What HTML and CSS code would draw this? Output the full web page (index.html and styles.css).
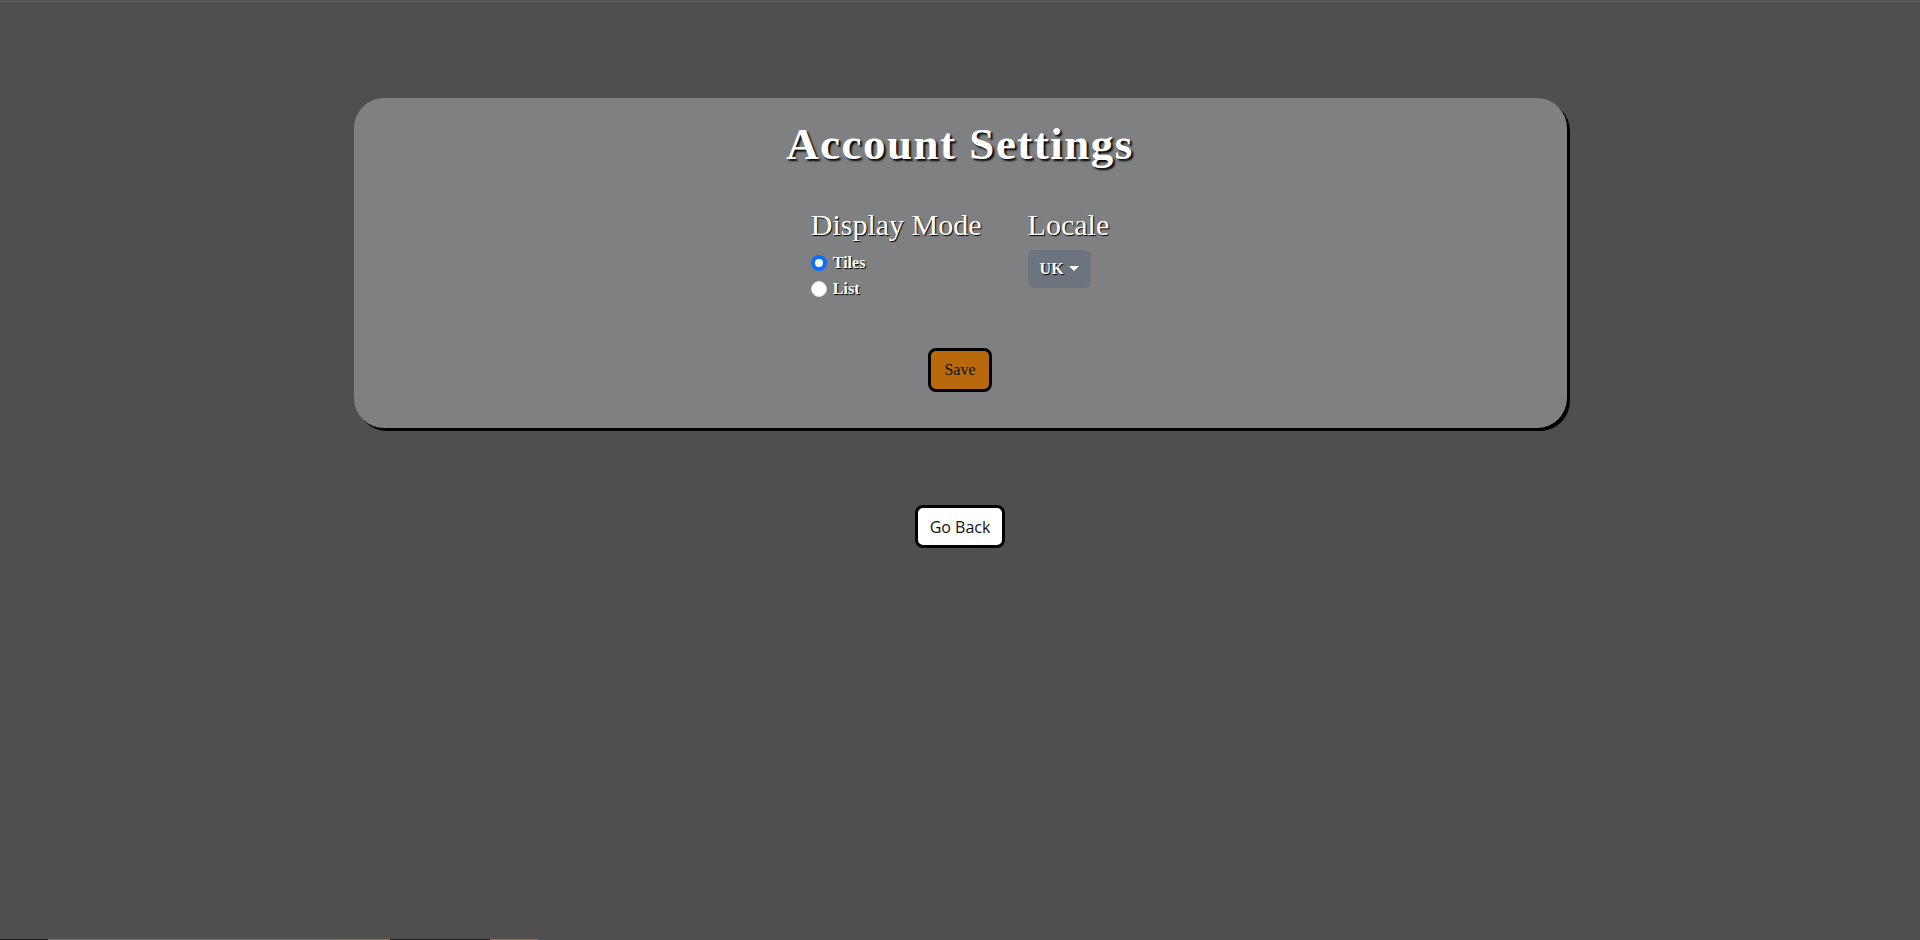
FILE: index.html
```html
<!DOCTYPE html>
<html lang="en">
<head>
<meta charset="utf-8">
<title>Account Settings</title>
<link rel="stylesheet" href="styles.css">
</head>
<body>
<div class="topline"></div>
<main class="page">
  <section class="card">
    <h1 class="title">Account Settings</h1>
    <div class="settings">
      <div class="group">
        <h3 class="group-title">Display Mode</h3>
        <label class="radio"><input type="radio" name="mode" checked><span>Tiles</span></label>
        <label class="radio"><input type="radio" name="mode"><span>List</span></label>
      </div>
      <div class="group">
        <h3 class="group-title">Locale</h3>
        <button class="dropdown" type="button">UK<span class="caret"></span></button>
      </div>
    </div>
    <button class="save" type="button">Save</button>
  </section>
  <button class="back" type="button">Go Back</button>
</main>
<div class="bottom-strip">
  <span class="s1"></span><span class="s2"></span><span class="s3"></span><span class="s4"></span><span class="s5"></span>
</div>
</body>
</html>
```
FILE: styles.css
```css
html, body {
  margin: 0;
  padding: 0;
}
body {
  background: #4f4f4f;
  min-height: 940px;
  display: flex;
  flex-direction: column;
  font-family: "Liberation Serif", "Times New Roman", serif;
  color: #fff;
}
.topline {
  height: 1px;
  margin-top: 1px;
  background: #5d5b66;
}
.page {
  display: flex;
  flex-direction: column;
  align-items: center;
  padding-top: 96px;
}
.card {
  width: 1213px;
  box-sizing: border-box;
  background: #7f8082;
  border-radius: 30px;
  box-shadow: 3px 3px 0 #000;
  display: flex;
  flex-direction: column;
  align-items: center;
  padding: 22px 0 36px;
}
.title {
  margin: 0;
  font-size: 45px;
  line-height: 49px;
  font-weight: 700;
  letter-spacing: 1.5px;
  text-shadow: 2px 2px 2px #000;
}
.settings {
  display: flex;
  gap: 46px;
  margin-top: 39px;
}
.group {
  display: flex;
  flex-direction: column;
  align-items: flex-start;
}
.group-title {
  margin: 0 0 8px;
  font-size: 30px;
  line-height: 34px;
  font-weight: 400;
  text-shadow: 1px 1px 1px #000;
}
.radio {
  display: flex;
  align-items: center;
  gap: 6px;
  height: 26px;
  font-size: 16px;
  font-weight: 700;
  text-shadow: 1px 1px 1px #000;
}
.radio input {
  appearance: none;
  margin: 0;
  width: 16px;
  height: 16px;
  border-radius: 50%;
  background: #fff;
  border: 1px solid #ddd;
  box-sizing: border-box;
}
.radio input:checked {
  background: #fff;
  border: 4px solid #0d6efd;
}
.dropdown {
  display: flex;
  align-items: center;
  gap: 5px;
  height: 38px;
  width: 63px;
  justify-content: center;
  padding: 0;
  border: 0;
  border-radius: 6px;
  background: #6c757d;
  color: #fff;
  font-family: "Liberation Serif", "Times New Roman", serif;
  font-size: 16px;
  font-weight: 700;
  text-shadow: 1px 1px 1px #000;
}
.caret {
  width: 0;
  height: 0;
  border-left: 5px solid transparent;
  border-right: 5px solid transparent;
  border-top: 5px solid #fff;
  margin-top: -2px;
}
.save {
  margin-top: 46px;
  height: 44px;
  padding: 0 13px;
  border: 3px solid #000;
  border-radius: 8px;
  background: #b8690b;
  color: #111;
  font-family: "Liberation Serif", "Times New Roman", serif;
  font-size: 16px;
}
.back {
  margin-top: 77px;
  height: 43px;
  padding: 0 12px;
  border: 3px solid #000;
  border-radius: 8px;
  background: #fff;
  color: #111;
  font-family: "Open Sans", "Noto Sans", sans-serif;
  font-size: 16px;
}
.bottom-strip {
  margin-top: auto;
  height: 1px;
  display: flex;
}
.bottom-strip span { display: block; height: 1px; }
.s1 { width: 48px; background: #1a1a1a; }
.s2 { width: 288px; background: #777; }
.s3 { width: 54px; background: #8a7a5a; }
.s4 { width: 100px; background: #1f1f1f; }
.s5 { width: 48px; background: #b8692b; }
```
